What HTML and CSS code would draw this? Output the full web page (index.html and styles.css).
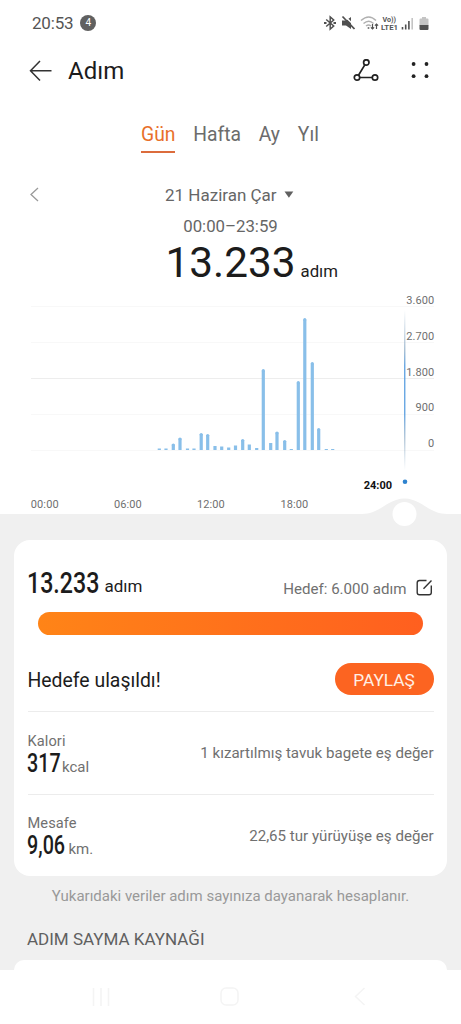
FILE: index.html
```html
<!DOCTYPE html>
<html lang="tr">
<head>
<meta charset="utf-8">
<title>Adım</title>
<link rel="stylesheet" href="styles.css">
</head>
<body>
<div class="screen">
  <header class="status">
    <span class="clock">20:53</span><span class="count">4</span>
    <svg class="status-icons" width="112" height="20" viewBox="320 13 112 20">
      <g fill="none" stroke="#505050" stroke-width="1.5">
        <path d="M326.200 19.500l7.500 6.500-3.500 3v-12l3.500 3-7.500 6.500"/>
        <path d="M324 23h2.500m7 0h2.500" stroke-width="2"/>
      </g>
      <path d="M342 20.500h4l5-3.500v12l-5-3.500h-4z" fill="#505050"/>
      <path d="M344 15.500l12 11.500" stroke="#fff" stroke-width="1.500"/>
      <path d="M342.500 16.500l12 12.500" stroke="#505050" stroke-width="1.800"/>
      <g fill="none" stroke="#b0b0b0" stroke-width="1.500">
        <path d="M361 20.500c5-4.500 10.500-4.500 15 0M363.500 23.500c3.500-3 7-3 10 0M366 26c2-1.500 3-1.500 5 0"/>
      </g>
      <circle cx="368.500" cy="28" r="1" fill="#777"/>
      <path d="M372.500 24v5m-1.600-1.600l1.600 1.600 1.600-1.600M376.500 29v-5m-1.600 1.600l1.600-1.600 1.600 1.600" fill="none" stroke="#505050" stroke-width="1.200"/>
      <text x="382.500" y="21.800" class="net" textLength="13.500" lengthAdjust="spacingAndGlyphs">Vo))</text>
      <text x="381" y="30" class="net lte" textLength="17" lengthAdjust="spacingAndGlyphs">LTE1</text>
      <path d="M402.500 27v2.500M405.700 24.500v5M408.900 21v8.500" stroke="#505050" stroke-width="1.600"/>
      <path d="M412.200 18v11.500" stroke="#c4c4c4" stroke-width="1.600"/>
      <path d="M419.500 19.500q0-1 1-1h1.500v-1.500h4v1.500h1.500q1 0 1 1v6h-9z" fill="#c4c4c4"/>
      <path d="M419.500 25h9v4q0 1-1 1h-7q-1 0-1-1z" fill="#505050"/>
    </svg>
  </header>

  <div class="appbar">
    <svg class="back" width="24" height="22" viewBox="0 0 24 22"><path d="M11 1L1.500 10.800 11 20.500M1.500 10.800H22.500" fill="none" stroke="#333" stroke-width="1.500"/></svg>
    <h1>Adım</h1>
    <svg width="28" height="24" viewBox="0 0 28 24"><g fill="none" stroke="#222" stroke-width="1.700"><circle cx="14.300" cy="3.500" r="2.700"/><circle cx="5" cy="18.500" r="2.700"/><circle cx="23" cy="18.500" r="2.700"/><path d="M12.800 5.900L6.500 16.200M7.700 18.500h12.600"/></g></svg>
    <svg class="more" width="20" height="20" viewBox="0 0 20 20"><g fill="#222"><circle cx="3.600" cy="3" r="1.900"/><circle cx="16.500" cy="3" r="1.900"/><circle cx="3.600" cy="15.200" r="1.900"/><circle cx="16.500" cy="15.200" r="1.900"/></g></svg>
  </div>

  <nav class="tabs">
    <span class="tab active">Gün</span><span class="tab">Hafta</span><span class="tab">Ay</span><span class="tab">Yıl</span>
  </nav>

  <div class="date">
    <svg width="10" height="16" viewBox="0 0 10 16"><path d="M9 1L2 7.500 9 14" fill="none" stroke="#9a9a9a" stroke-width="1.300"/></svg>
    <span class="day">21 Haziran Çar</span>
    <svg width="10" height="8" viewBox="0 0 10 8"><path d="M.5.500h8.800L4.900 6.700z" fill="#606060"/></svg>
  </div>
  <div class="range">00:00–23:59</div>
  <div class="total"><span class="total-num">13.233</span><span class="total-unit">adım</span></div>

  <svg class="chart" width="461" height="250" viewBox="0 290 461 250">
    <defs>
      <linearGradient id="cursor" x1="0" y1="0" x2="0" y2="1">
        <stop offset="0" stop-color="#8aa9c4" stop-opacity="0"/>
        <stop offset=".25" stop-color="#8aa9c4" stop-opacity=".8"/>
        <stop offset=".35" stop-color="#5b9fe0"/>
        <stop offset=".65" stop-color="#5b9fe0"/>
        <stop offset=".8" stop-color="#8aa9c4" stop-opacity=".7"/>
        <stop offset="1" stop-color="#8aa9c4" stop-opacity="0"/>
      </linearGradient>
    </defs>
    <path d="M0 514H362C380 514 388 498.500 404.500 498.500S429 514 447 514H461V540H0z" fill="#f0f0f0"/>
    <circle cx="404.500" cy="514" r="12" fill="#fff"/>
    <path d="M31 306.500H434M31 342.500H434M31 414.500H434M31 450.500H434" stroke="#f8f8f8"/>
    <path d="M31 378.500H434" stroke="#ededed"/>
    <g stroke="#89bfe9" stroke-width="3.200">
      <path d="M159.300 450v-1.500M166 450v-1.500M173.300 450v-5.500M180 450v-11.500M187.500 450v-1.500M194 450v-1.500M201.200 450v-16M207.700 450v-15M215 450v-4M221.700 450v-3.500M228.700 450v-2.500M235.500 450v-4.500M242.700 450v-10M249.300 450v-5.500M256.700 450v-2M263.300 450v-79.500M270.700 450v-7M277 450v-17.500M284.700 450v-9M291.300 450v-1M298.300 450v-67.500M304.800 450v-130.500M312.300 450v-86.500M318.700 450v-20.500M326.300 450v-1M332.700 450v-1"/>
      <path d="M173.300 445h0M180 439h0M201.200 434.500h0M207.700 435.500h0M242.700 440.500h0M263.300 370.700h0M277 433h0M284.700 441.500h0M298.300 382.700h0M304.800 319.700h0M312.300 363.500h0M318.700 429.500h0" stroke-linecap="round"/>
    </g>
    <rect x="404.100" y="310" width="1.300" height="160" fill="url(#cursor)"/>
    <circle cx="405" cy="481.800" r="2.300" fill="#2e83cf"/>
    <g class="axis" text-anchor="end">
      <text x="434.300" y="303.800">3.600</text><text x="434.300" y="339.800">2.700</text><text x="434.300" y="375.500">1.800</text><text x="434.300" y="411.200">900</text><text x="434.300" y="447">0</text>
    </g>
    <g class="axis">
      <text x="30.800" y="507.600">00:00</text><text x="114" y="507.600">06:00</text><text x="197" y="507.600">12:00</text><text x="280.500" y="507.600">18:00</text>
      <text x="363.700" y="489.300" class="now">24:00</text>
    </g>
  </svg>

  <section class="card">
    <div class="goal">
      <span class="goal-num">13.233</span><span class="goal-unit">adım</span>
      <span class="goal-target">Hedef: 6.000 adım</span>
      <svg width="17" height="18" viewBox="0 0 17 18"><path d="M10.500 1.500H3.500Q1.200 1.500 1.200 3.800V13.500Q1.200 15.800 3.500 15.800H13Q15.300 15.800 15.300 13.500V6.500M15.500 1.500L7.500 9.700" fill="none" stroke="#333" stroke-width="1.400"/></svg>
    </div>
    <div class="bar"></div>
    <div class="reached"><span>Hedefe ulaşıldı!</span><button class="share">PAYLAŞ</button></div>
    <div class="row">
      <div><div class="label">Kalori</div><div class="value"><b class="cal">317</b><span>kcal</span></div></div>
      <div class="note">1 kızartılmış tavuk bagete eş değer</div>
    </div>
    <div class="row">
      <div><div class="label">Mesafe</div><div class="value"><b class="dist">9,06</b><span>km.</span></div></div>
      <div class="note">22,65 tur yürüyüşe eş değer</div>
    </div>
  </section>
  <p class="hint">Yukarıdaki veriler adım sayınıza dayanarak hesaplanır.</p>
  <h2>ADIM SAYMA KAYNAĞI</h2>
  <div class="next"></div>
  <footer class="navbar">
    <svg width="461" height="54" viewBox="0 970 461 54" fill="none" stroke="#f4f4f4" stroke-width="1.500">
      <path d="M93.500 988v18M101 988v18M108.500 988v18"/>
      <rect x="221" y="988" width="17" height="17" rx="5"/>
      <path d="M364.500 988l-9 8.500 9 8.500"/>
    </svg>
  </footer>
</div>
</body>
</html>
```
FILE: styles.css
```css
* { box-sizing: border-box; }
body { margin: 0; background: #f0f0f0; font-family: Roboto, "Noto Sans", sans-serif; color: #1c1c1c; }
.screen { width: 461px; height: 1024px; overflow: hidden; display: flex; flex-direction: column; background: linear-gradient(#fff 514px, #f0f0f0 514px); }
svg { display: block; flex: none; }
.status { height: 46px; padding: 0 29px 0 32px; display: flex; align-items: center; }
.clock { font-size: 17px; letter-spacing: -.2px; color: #555; }
.count { width: 16px; height: 16px; margin-left: 7px; border-radius: 50%; background: #606060; color: #fff; font-size: 10px; line-height: 16px; text-align: center; }
.status-icons { margin-left: auto; }
.net { font-size: 6.500px; font-weight: 700; fill: #555; }
.lte { font-size: 8px; }
.appbar { height: 50px; padding: 0 31px 0 29px; display: flex; align-items: center; }
h1 { margin: 0 auto 0 15px; font-size: 24px; font-weight: 400; line-height: 30px; }
.more { margin-left: 30px; }
.tabs { height: 84px; padding: 26px 0 0 141px; display: flex; align-items: flex-start; gap: 17.800px; font-size: 19.300px; line-height: 25px; color: #6c6c6c; }
.tab { height: 31px; }
.active { color: #e8702a; border-bottom: 2px solid #dc6c3c; }
.date { height: 30px; padding-left: 29px; display: flex; align-items: center; color: #666; font-size: 17px; }
.day { margin: 0 7px 0 126px; }
.range { height: 32px; line-height: 33px; font-size: 16.800px; color: #666; text-align: center; }
.total { height: 48px; padding-left: 165.500px; display: flex; align-items: baseline; line-height: 42px; }
.total-num { font-size: 42.300px; }
.total-unit { font-size: 16.800px; margin-left: 5px; }
.chart { flex: none; }
.axis { font-size: 11px; fill: #6f6f6f; letter-spacing: .1px; }
.now { fill: #111; font-weight: 700; letter-spacing: 0; }
.card { flex: none; width: 433px; height: 336px; margin: 0 14px; padding: 0 13.500px; border-radius: 16px; background: #fff; }
.goal { height: 72px; padding: 13px 1px 0 0; display: flex; align-items: center; }
.goal-num { font-size: 29px; font-weight: 500; width: 77px; transform: scaleX(.8); transform-origin: left; white-space: nowrap; margin-left: -1px; margin-right: 1px; }
.goal-unit { font-size: 17px; padding-top: 7px; }
.goal-target { margin: 12px 9px 0 auto; font-size: 15.100px; color: #707070; }
.goal svg { margin-top: 10px; }
.bar { height: 23px; margin: 0 11px 0 10.500px; border-radius: 12px; background: linear-gradient(90deg, #ff8417, #ff5f1f); }
.reached { height: 76px; padding-top: 12px; display: flex; align-items: center; justify-content: space-between; font-size: 19.400px; }
.reached span { padding-top: 2px; }
.share { width: 99px; height: 32px; border: 0; border-radius: 16px; background: #fc6421; color: #ffefe5; font: 17.300px Roboto, sans-serif; padding: 2px 0 0; }
.row { height: 82.500px; display: flex; justify-content: space-between; align-items: center; border-top: 1px solid #ececec; }
.label { font-size: 14.600px; line-height: 18px; color: #707070; letter-spacing: .1px; margin-top: 7px; }
.value { display: flex; align-items: baseline; line-height: 28px; }
.value b { display: block; font-size: 25px; font-weight: 500; transform: scaleX(.79); transform-origin: left; white-space: nowrap; margin-left: -1px; }
.cal { width: 35.500px; }
.dist { width: 42px; }
.value span { font-size: 15px; color: #707070; }
.note { font-size: 15.100px; color: #707070; padding-top: 1px; }
.hint { flex: none; margin: 10px 0 0; height: 20px; font-size: 15px; line-height: 20px; color: #999; text-align: center; }
h2 { flex: none; margin: 22px 0 0 27px; height: 22px; font-size: 17px; line-height: 23px; font-weight: 400; color: #606060; }
.next { flex: none; height: 10px; margin: 10px 14px 0; background: #fff; border-radius: 16px 16px 0 0; }
.navbar { flex: none; height: 54px; background: #fff; }
```
